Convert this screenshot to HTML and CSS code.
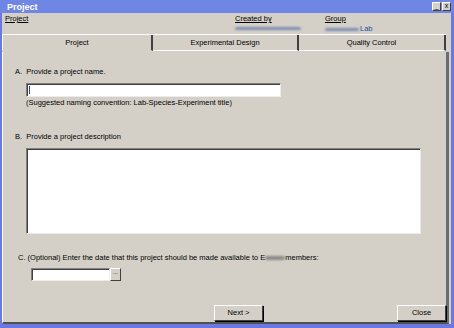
FILE: index.html
```html
<!DOCTYPE html>
<html lang="en">
<head>
    <meta charset="UTF-8">
    <title>Project</title>
    <link rel="stylesheet" href="styles.css">
</head>
<body>
    <div class="window">
        <div class="titlebar">
            <span class="title">Project</span>
            <div class="controls">
                <span class="ctl">_</span>
                <span class="ctl">x</span>
            </div>
        </div>

        <div class="body">
            <div class="info">
                <div class="info-col col-project">
                    <span class="info-label">Project</span>
                </div>
                <div class="info-col col-created">
                    <span class="info-label">Created by</span>
                    <span class="blur blur-wide"></span>
                </div>
                <div class="info-col col-group">
                    <span class="info-label">Group</span>
                    <span class="group-value"><span class="blur blur-short"></span>Lab</span>
                </div>
            </div>

            <div class="tabs">
                <div class="tab active">Project</div>
                <div class="tab">Experimental Design</div>
                <div class="tab last">Quality Control</div>
            </div>

            <div class="panel">
                <div class="section sec-a">
                    <div class="question">A.&nbsp; Provide a project name.</div>
                    <div class="field name-field"><span class="caret"></span></div>
                    <div class="hint">(Suggested naming convention: Lab-Species-Experiment title)</div>
                </div>

                <div class="section sec-b">
                    <div class="question">B.&nbsp; Provide a project description</div>
                    <div class="field desc-field"></div>
                </div>

                <div class="section sec-c">
                    <div class="question q-c">C. (Optional) Enter the date that this project should be made available to E<span class="blur blur-word"></span>members:</div>
                    <div class="date-row">
                        <div class="field date-field"></div>
                        <div class="date-btn">...</div>
                    </div>
                </div>

                <div class="actions">
                    <div class="btn btn-next">Next &gt;</div>
                    <div class="btn btn-close">Close</div>
                </div>
            </div>
        </div>
    </div>
</body>
</html>
```

FILE: styles.css
```css
body {
    margin: 0;
    width: 454px;
    height: 328px;
    overflow: hidden;
    background-color: #6a78e2;
    font-family: "Liberation Sans", Arial, sans-serif;
    font-size: 7.5px;
    color: #000000;
}

.window {
    display: flex;
    flex-direction: column;
    height: 328px;
}

.titlebar {
    height: 13px;
    display: flex;
    align-items: center;
    justify-content: space-between;
    background-color: #6f86e4;
    padding: 0 3px 0 7px;
}

.title {
    color: #ffffff;
    font-weight: bold;
    font-size: 9px;
}

.controls {
    display: flex;
    gap: 1px;
}

.ctl {
    width: 7px;
    height: 7px;
    background-color: #d4d0c8;
    border: 1px solid #ffffff;
    border-right-color: #404040;
    border-bottom-color: #404040;
    font-size: 7px;
    line-height: 6px;
    text-align: center;
    color: #000000;
}

.body {
    flex: 1;
    margin: 0 3px 4px 2px;
    background-color: #d4d0c8;
    display: flex;
    flex-direction: column;
}

/* header info */
.info {
    height: 21px;
    display: flex;
}

.info-col {
    display: flex;
    flex-direction: column;
    padding-top: 1px;
}

.col-project {
    margin-left: 3px;
    width: 230px;
}

.col-created {
    width: 90px;
}

.info-label {
    text-decoration: underline;
    line-height: 10px;
}

.blur {
    display: inline-block;
    height: 3px;
    border-radius: 2px;
    background-color: #7f8fb0;
    filter: blur(1px);
}

.blur-wide {
    width: 66px;
    margin-top: 3px;
}

.group-value {
    color: #2a4e9e;
    line-height: 10px;
    display: flex;
    align-items: center;
}

.blur-short {
    width: 34px;
    margin-right: 1px;
}

.blur-word {
    width: 20px;
    height: 4px;
    background-color: #8a8a8a;
    vertical-align: middle;
}

/* tabs */
.tabs {
    display: flex;
    height: 17px;
    border-top: 1px solid #ffffff;
    margin-right: 5px;
}

.tab {
    height: 15px;
    line-height: 15px;
    text-align: center;
    border-right: 2px solid #404040;
    border-bottom: 1px solid #ffffff;
}

.tab.active {
    width: 148px;
    border-bottom-color: transparent;
    border-left: 1px solid #ffffff;
}

.tab:nth-child(2) {
    width: 144px;
}

.tab.last {
    flex: 1;
}

/* panel */
.panel {
    flex: 1;
    border-right: 3px solid #6c6c6c;
    border-bottom: 2px solid #505050;
    border-left: 1px solid #ffffff;
    margin-right: 2px;
    display: flex;
    flex-direction: column;
}

.section {
    display: flex;
    flex-direction: column;
}

.question {
    line-height: 10px;
}

.sec-a {
    padding: 15px 0 0 12px;
}

.name-field {
    width: 253px;
    height: 12px;
    margin: 6px 0 0 11px;
}

.field {
    background-color: #ffffff;
    border: 1px solid #808080;
    border-right-color: #ececec;
    border-bottom-color: #ececec;
    box-shadow: inset 1px 1px 0 #404040;
}

.caret {
    display: block;
    width: 1px;
    height: 8px;
    margin: 2px 0 0 2px;
    background-color: #3040c0;
}

.hint {
    margin: 1px 0 0 11px;
    line-height: 10px;
}

.sec-b {
    padding: 24px 0 0 12px;
}

.desc-field {
    width: 393px;
    height: 84px;
    margin: 6px 0 0 11px;
}

.sec-c {
    padding: 19px 0 0 15px;
}

.date-row {
    display: flex;
    margin: 5px 0 0 13px;
}

.date-field {
    width: 77px;
    height: 11px;
}

.date-btn {
    width: 9px;
    height: 11px;
    border: 1px solid #ffffff;
    border-right-color: #404040;
    border-bottom-color: #404040;
    font-size: 6px;
    line-height: 7px;
    text-align: center;
    background-color: #d4d0c8;
}

.actions {
    margin-top: auto;
    display: flex;
    justify-content: space-between;
    padding: 0 0 1px 211px;
}

.btn {
    width: 47px;
    height: 14px;
    line-height: 14px;
    text-align: center;
    background-color: #d4d0c8;
    border: 1px solid #ffffff;
    border-right-color: #404040;
    border-bottom-color: #404040;
    box-shadow: 1px 1px 0 #000000;
}
```
